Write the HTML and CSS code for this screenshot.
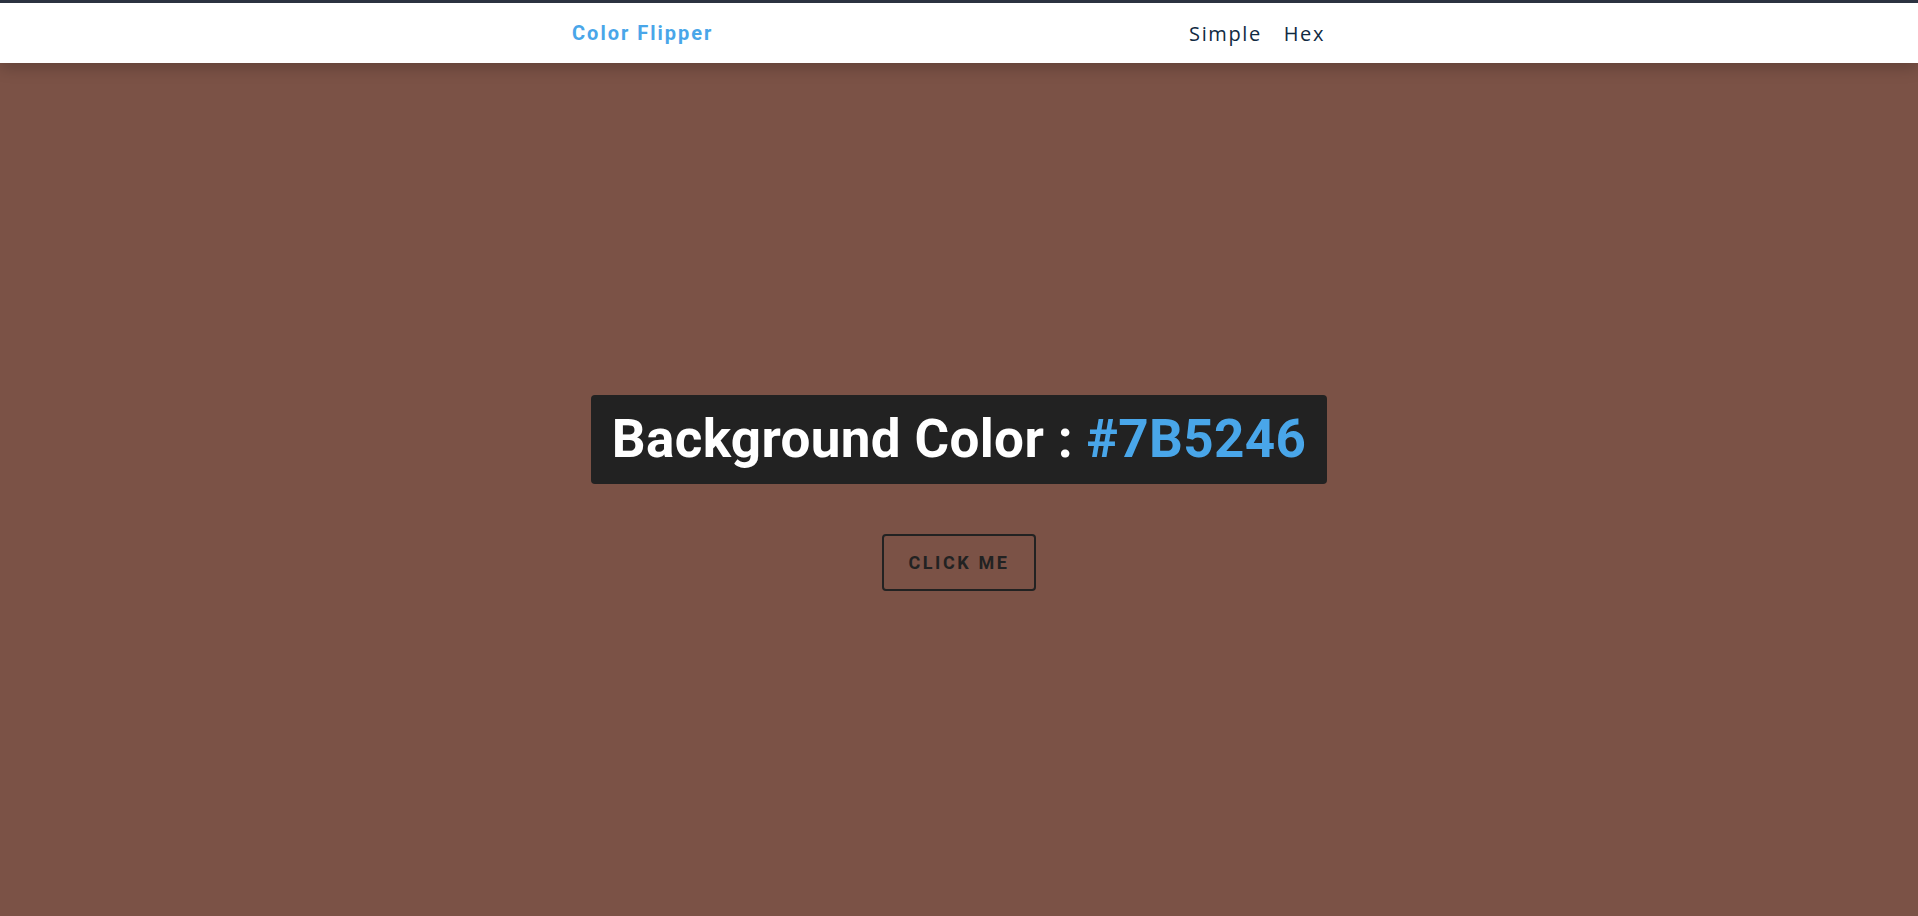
FILE: index.html
```html
<!DOCTYPE html>
<html lang="en">
<head>
<meta charset="utf-8">
<title>Color Flipper</title>
<link rel="stylesheet" href="styles.css">
</head>
<body>
<nav class="nav">
  <div class="nav-center">
    <h4 class="brand">Color Flipper</h4>
    <ul class="nav-links">
      <li><a href="#">Simple</a></li>
      <li><a href="#">Hex</a></li>
    </ul>
  </div>
</nav>
<main class="main">
  <div class="container">
    <h2 class="title">Background Color : <span class="color">#7B5246</span></h2>
    <button class="btn" type="button">click me</button>
  </div>
</main>
</body>
</html>
```

FILE: styles.css
```css
* { margin: 0; padding: 0; box-sizing: border-box; }
html, body { height: 100%; }
body {
  background: #7B5246;
  font-family: Roboto, "Liberation Sans", sans-serif;
  border-top: 3px solid #2b3240;
  overflow: hidden;
}
.nav {
  background: #fff;
  box-shadow: 0 5px 15px rgba(0, 0, 0, 0.2);
  position: relative;
  z-index: 1;
}
.nav-center {
  width: 776px;
  margin: 0 auto;
  height: 60px;
  display: flex;
  justify-content: space-between;
  align-items: center;
  padding-left: 1px;
  padding-right: 22px;
}
.brand {
  color: #49A6E9;
  font-size: 20px;
  font-weight: 700;
  letter-spacing: 2px;
}
.nav-links {
  list-style: none;
  display: flex;
  gap: 22px;
}
.nav-links a {
  text-decoration: none;
  color: #102a42;
  font-family: "Open Sans", sans-serif;
  font-size: 20px;
  letter-spacing: 1.6px;
}
.main {
  height: calc(100% - 60px);
  display: flex;
  align-items: center;
  justify-content: center;
}
.container {
  display: flex;
  flex-direction: column;
  align-items: center;
  gap: 50px;
  margin-top: 6px;
}
.title {
  background: #222;
  color: #fff;
  font-size: 53px;
  font-weight: 700;
  letter-spacing: 0.35px;
  padding: 0 21px;
  height: 89px;
  line-height: 89px;
  border-radius: 4px;
}
.color { color: #49A6E9; }
.btn {
  background: transparent;
  border: 2.5px solid #222;
  border-radius: 4px;
  width: 154px;
  height: 57px;
  font-family: Roboto, "Liberation Sans", sans-serif;
  font-size: 18px;
  font-weight: 700;
  letter-spacing: 2.6px;
  text-transform: uppercase;
  color: #222;
  cursor: pointer;
}
```
